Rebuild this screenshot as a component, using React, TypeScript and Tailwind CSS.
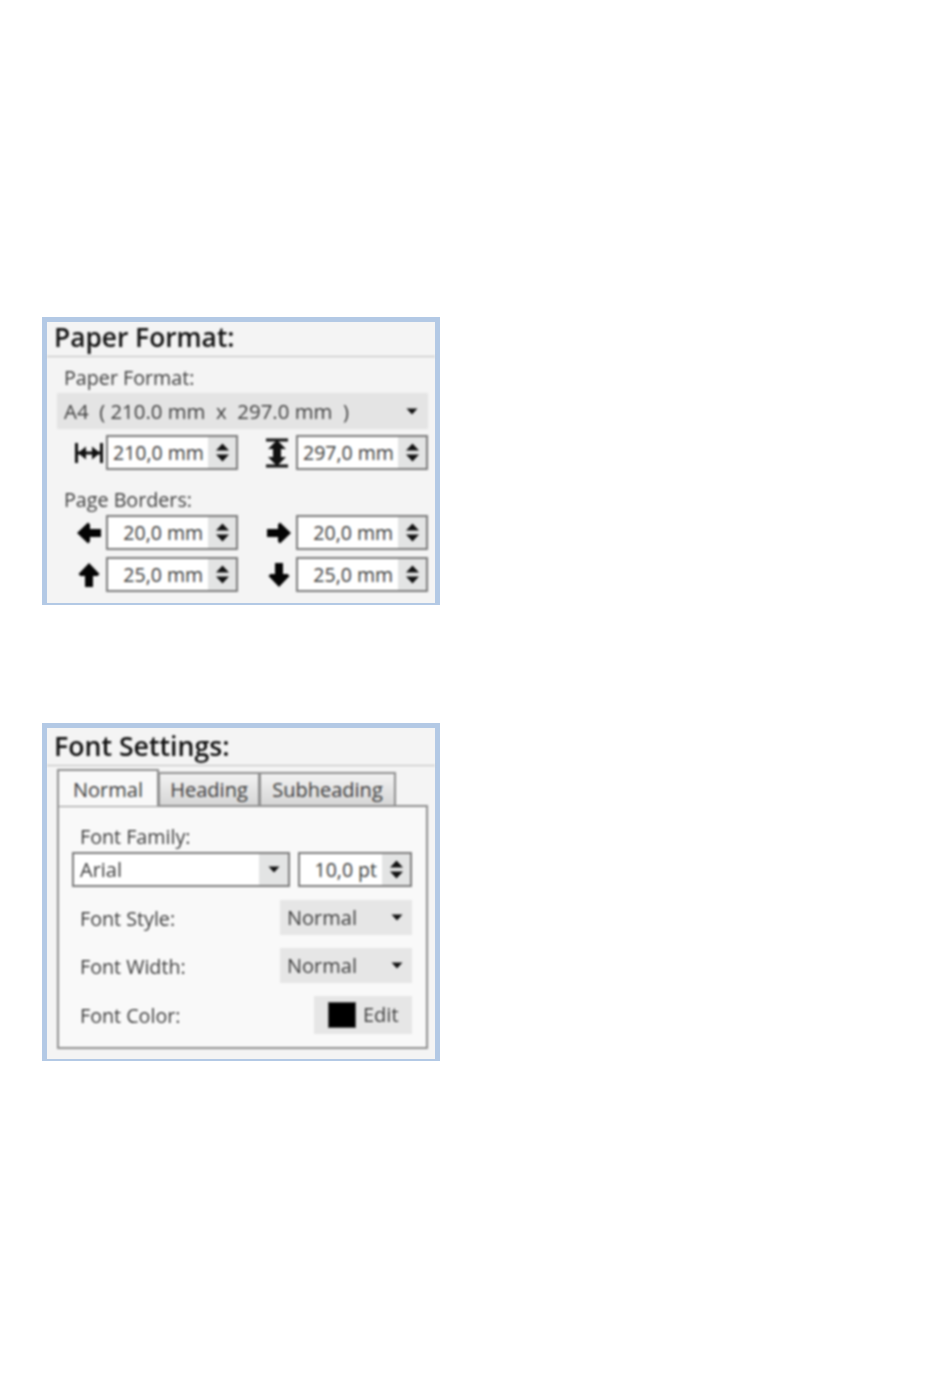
import React from "react";

const Caret = () => (
  <svg width="12" height="7" viewBox="0 0 12 7" className="shrink-0">
    <path d="M0.5 0.5H11.5L6 6.5Z" fill="#111" />
  </svg>
);

const SpinArrows = () => (
  <svg width="15" height="23" viewBox="0 0 15 23">
    <path d="M7.5 2.5L14 9.5H1Z" fill="#111" />
    <path d="M1 13.5H14L7.5 20.5Z" fill="#111" />
  </svg>
);

function Spin({ value, w = "w-[132px]", align = "right" }: { value: string; w?: string; align?: "left" | "right" }) {
  return (
    <div className={`${w} h-[35px] flex border-2 border-[#7c7c7c] bg-white shrink-0`}>
      <div
        className={`flex-1 min-w-0 flex items-center text-[19.5px] text-[#3c3c3c] whitespace-nowrap ${
          align === "right" ? "justify-end pr-[5px]" : "pl-[5px]"
        }`}
      >
        {value}
      </div>
      <div className="w-[28px] bg-[#e3e4e4] flex items-center justify-center shrink-0">
        <SpinArrows />
      </div>
    </div>
  );
}

const ArrowIcon = ({ d }: { d: string }) => (
  <svg width="28" height="28" viewBox="0 0 28 28" className="shrink-0">
    <path d={d} fill="#050505" />
  </svg>
);

const LEFT = "M2 14L13 3.5L15 5.5V10H26V18H15V22.5L13 24.5Z";
const RIGHT = "M26 14L15 3.5L13 5.5V10H2V18H13V22.5L15 24.5Z";
const UP = "M14 2L24.5 13L22.5 15H18V26H10V15H5.5L3.5 13Z";
const DOWN = "M14 26L24.5 15L22.5 13H18V2H10V13H5.5L3.5 15Z";

const Label = ({ children, className = "" }: { children: React.ReactNode; className?: string }) => (
  <div className={`text-[19.7px] leading-[24px] text-[#3c3c3c] ${className}`}>{children}</div>
);

function IconRow({ left, right }: { left: React.ReactNode; right: React.ReactNode }) {
  return (
    <div className="flex pl-[18px] gap-[27px]">
      <div className="flex items-center gap-[3px]">{left}</div>
      <div className="flex items-center gap-[3px]">{right}</div>
    </div>
  );
}

const Panel = ({ h, children }: { h: string; children: React.ReactNode }) => (
  <div className={`w-[398px] ${h} bg-[#f4f4f4] border-t-[5px] border-x-[5px] border-b-[2px] border-[#b3c9e5]`}>
    <div className="blur-[0.8px]">{children}</div>
  </div>
);

const Tab = ({ w, children }: { w: string; children: React.ReactNode }) => (
  <div className={`${w} h-[33px] pt-[1px] flex items-center justify-center border-2 border-b-0 border-[#8f8f8f] bg-gradient-to-b from-[#f3f3f3] to-[#d6d6d6] text-[20px] text-[#3c3c3c] -ml-px`}>
    {children}
  </div>
);

const Select = ({ children }: { children: React.ReactNode }) => (
  <div className="w-[132px] h-[35px] bg-[#e6e6e6] flex items-center justify-between pl-[7px] pr-[9px] text-[20px] text-[#3c3c3c]">
    {children}
    <Caret />
  </div>
);

export default function App() {
  return (
    <div
      className="w-[950px] h-[1397px] bg-white pt-[317px] pl-[42px] flex flex-col gap-[118px]"
      style={{ fontFamily: '"Open Sans", "Noto Sans", sans-serif' }}
    >
      <Panel h="h-[288px]">
        <div className="h-[35px] flex items-center pl-[7px] pb-[4px] border-b border-[#bcbcbc] text-[26.3px] font-semibold text-[#111] leading-none">
          Paper Format:
        </div>
        <div className="pt-[9px] pl-[10px] pr-[7px]">
          <Label className="pl-[7px]">Paper Format:</Label>
          <div className="mt-[3px] h-[36px] bg-[#e4e4e4] flex items-center justify-between pl-[7px] pr-[10px] text-[20.4px] text-[#3c3c3c] whitespace-pre">
            <span>A4  ( 210.0 mm  x  297.0 mm  )</span>
            <Caret />
          </div>
          <div className="mt-[6px]">
            <IconRow
              left={
                <>
                  <svg width="28" height="24" viewBox="0 0 28 24" className="shrink-0">
                    <path d="M1.5 2V22M26.5 2V22" stroke="#111" strokeWidth="3" />
                    <path d="M2 12H26" stroke="#111" strokeWidth="3" />
                    <path d="M3 12L11 5.5V18.5ZM25 12L17 5.5V18.5Z" fill="#111" />
                  </svg>
                  <Spin value="210,0 mm" align="left" />
                </>
              }
              right={
                <>
                  <svg width="28" height="30" viewBox="0 0 28 30" className="shrink-0 -translate-x-[2px]">
                    <path d="M3 2H25M3 28H25" stroke="#111" strokeWidth="3" />
                    <path d="M14 2L23 11H18V19H23L14 28L5 19H10V11H5Z" fill="#111" />
                  </svg>
                  <Spin value="297,0 mm" align="left" />
                </>
              }
            />
          </div>
          <Label className="pl-[7px] mt-[18px]">Page Borders:</Label>
          <div className="mt-[3px] flex flex-col gap-[7px]">
            <IconRow
              left={
                <>
                  <ArrowIcon d={LEFT} />
                  <Spin value="20,0 mm" />
                </>
              }
              right={
                <>
                  <ArrowIcon d={RIGHT} />
                  <Spin value="20,0 mm" />
                </>
              }
            />
            <IconRow
              left={
                <>
                  <ArrowIcon d={UP} />
                  <Spin value="25,0 mm" />
                </>
              }
              right={
                <>
                  <ArrowIcon d={DOWN} />
                  <Spin value="25,0 mm" />
                </>
              }
            />
          </div>
        </div>
      </Panel>

      <Panel h="h-[338px]">
        <div className="h-[38px] flex items-center pl-[7px] border-b border-[#bcbcbc] text-[26.7px] font-semibold text-[#111] leading-none">
          Font Settings:
        </div>
        <div className="pt-[3px] pl-[10px] pr-[7px]">
          <div className="relative z-10 flex items-end h-[36px]">
            <div className="w-[102px] h-[37px] pt-[2px] -mb-[1px] flex items-center justify-center border-2 border-b-0 border-[#8f8f8f] bg-[#f9f9f9] text-[20px] text-[#3c3c3c]">
              Normal
            </div>
            <Tab w="w-[102px]">Heading</Tab>
            <Tab w="w-[137px]">Subheading</Tab>
          </div>
          <div className="h-[244px] w-[371px] border-2 border-[#8f8f8f] bg-[#f9f9f9] pl-[13px] pr-[14px] pt-[17px]">
            <Label className="pl-[8px] pt-[1px] -mb-[1px]">Font Family:</Label>
            <div className="mt-[4px] flex justify-between">
              <div className="w-[218px] h-[35px] flex border-2 border-[#7c7c7c] bg-white">
                <div className="flex-1 flex items-center pl-[6px] text-[20px] text-[#3c3c3c]">Arial</div>
                <div className="w-[29px] bg-[#e3e4e4] flex items-center justify-center">
                  <Caret />
                </div>
              </div>
              <Spin value="10,0 pt" w="w-[114px]" />
            </div>
            <div className="mt-[13px] flex items-center justify-between">
              <Label className="pl-[8px] pt-[2px]">Font Style:</Label>
              <Select>Normal</Select>
            </div>
            <div className="mt-[13px] flex items-center justify-between">
              <Label className="pl-[8px] pt-[2px]">Font Width:</Label>
              <Select>Normal</Select>
            </div>
            <div className="mt-[13px] flex items-center justify-between">
              <Label className="pl-[8px] pt-[2px]">Font Color:</Label>
              <div className="w-[98px] h-[38px] bg-[#e6e6e6] flex items-center pl-[14px] gap-[7px] text-[20px] text-[#3c3c3c]">
                <div className="w-[28px] h-[26px] bg-black border border-[#555]" />
                Edit
              </div>
            </div>
          </div>
        </div>
      </Panel>
    </div>
  );
}
